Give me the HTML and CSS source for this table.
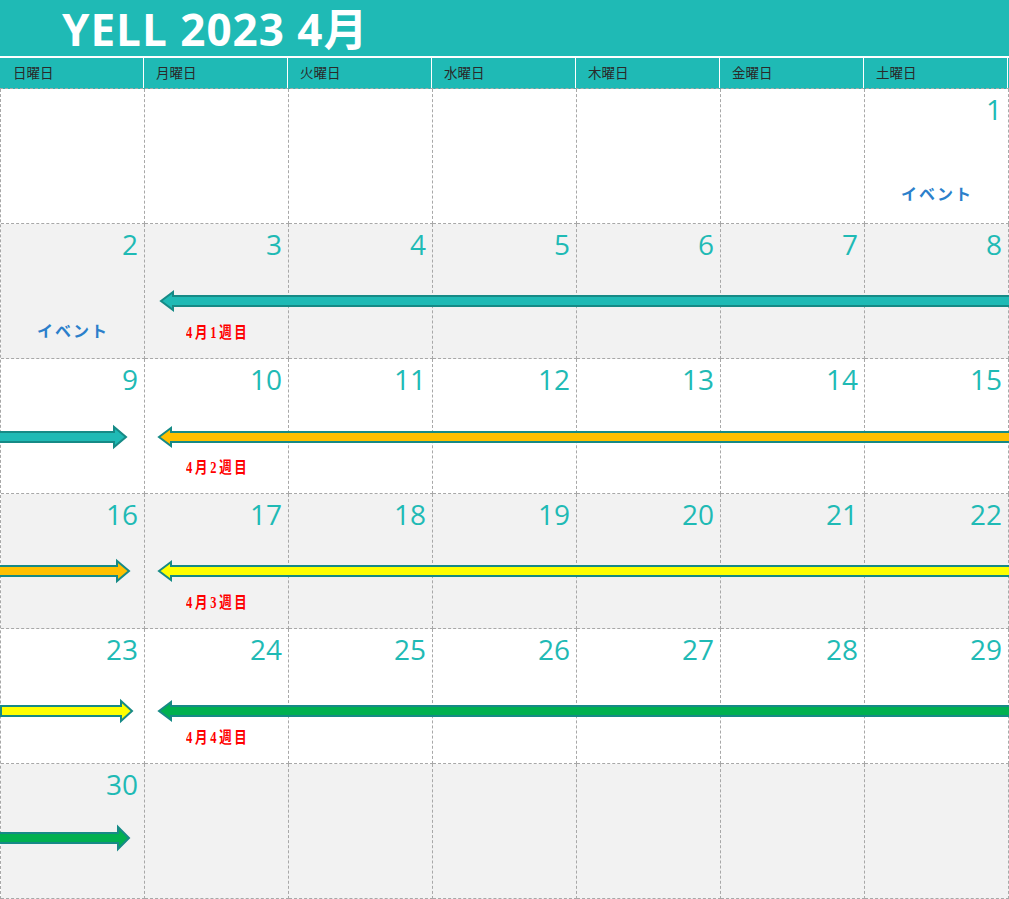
FILE: index.html
```html
<!DOCTYPE html>
<html lang="ja">
<head>
<meta charset="utf-8">
<link rel="stylesheet" href="styles.css">
</head>
<body>
<div class="page">
  <div class="title">YELL 2023 4月</div>
  <div class="weekdays">
    <div class="wd">日曜日</div><div class="wd">月曜日</div><div class="wd">火曜日</div><div class="wd">水曜日</div><div class="wd">木曜日</div><div class="wd">金曜日</div><div class="wd">土曜日</div>
  </div>
  <div class="grid">
    <div class="cell"></div><div class="cell"></div><div class="cell"></div><div class="cell"></div><div class="cell"></div><div class="cell"></div>
    <div class="cell"><span class="num">1</span><span class="event ev-sat">イベント</span></div>

    <div class="cell alt"><span class="num">2</span><span class="event ev-sun">イベント</span></div>
    <div class="cell alt"><span class="num">3</span><span class="week">4月1週目</span></div>
    <div class="cell alt"><span class="num">4</span></div>
    <div class="cell alt"><span class="num">5</span></div>
    <div class="cell alt"><span class="num">6</span></div>
    <div class="cell alt"><span class="num">7</span></div>
    <div class="cell alt"><span class="num">8</span></div>

    <div class="cell"><span class="num">9</span></div>
    <div class="cell"><span class="num">10</span><span class="week">4月2週目</span></div>
    <div class="cell"><span class="num">11</span></div>
    <div class="cell"><span class="num">12</span></div>
    <div class="cell"><span class="num">13</span></div>
    <div class="cell"><span class="num">14</span></div>
    <div class="cell"><span class="num">15</span></div>

    <div class="cell alt"><span class="num">16</span></div>
    <div class="cell alt"><span class="num">17</span><span class="week">4月3週目</span></div>
    <div class="cell alt"><span class="num">18</span></div>
    <div class="cell alt"><span class="num">19</span></div>
    <div class="cell alt"><span class="num">20</span></div>
    <div class="cell alt"><span class="num">21</span></div>
    <div class="cell alt"><span class="num">22</span></div>

    <div class="cell"><span class="num">23</span></div>
    <div class="cell"><span class="num">24</span><span class="week">4月4週目</span></div>
    <div class="cell"><span class="num">25</span></div>
    <div class="cell"><span class="num">26</span></div>
    <div class="cell"><span class="num">27</span></div>
    <div class="cell"><span class="num">28</span></div>
    <div class="cell"><span class="num">29</span></div>

    <div class="cell alt"><span class="num">30</span></div>
    <div class="cell alt"></div><div class="cell alt"></div><div class="cell alt"></div><div class="cell alt"></div><div class="cell alt"></div><div class="cell alt"></div>

    <svg class="arrows" width="1009" height="810" viewBox="0 0 1009 810">
      <polygon class="a-teal" points="161,212 173,203 173,207 1010,207 1010,217 173,217 173,221" />
      <polygon class="a-teal" points="-2,343 114,343 114,338 126,348 114,358 114,353 -2,353" />
      <polygon class="a-gold" points="159,348 171,339 171,343 1010,343 1010,353 171,353 171,357" />
      <polygon class="a-gold" points="-2,477 117,477 117,472 129,482 117,492 117,487 -2,487" />
      <polygon class="a-yellow" points="159,482 171,473 171,477 1010,477 1010,487 171,487 171,491" />
      <polygon class="a-yellow" points="1,617 121,617 121,612 132,622 121,632 121,627 1,627" />
      <polygon class="a-green" points="159,622 171,613 171,617 1010,617 1010,627 171,627 171,631" />
      <polygon class="a-green" points="-2,744 118,744 118,738 129,749 118,760 118,754 -2,754" />
    </svg>
  </div>
</div>
</body>
</html>
```

FILE: styles.css
```css
* { box-sizing: border-box; }
html, body { margin: 0; padding: 0; background: #fff; }
body { font-family: "Noto Sans CJK JP", "Noto Sans", sans-serif; }
.page { width: 1009px; }
.title {
  height: 56px;
  background: #1FBAB5;
  color: #fff;
  font-family: "Open Sans", "Noto Sans CJK JP", sans-serif;
  font-weight: 700;
  font-size: 44px;
  line-height: 58px;
  padding-left: 62px;
  letter-spacing: 1px;
}
.weekdays {
  margin-top: 2px;
  display: grid;
  grid-template-columns: repeat(7, 144px) 1px;
  height: 31px;
  background: #1FBAB5;
  border-bottom: 1px dashed #a8a8a8;
}
.wd {
  border-right: 1px solid #fff;
  font-size: 13.5px;
  color: #2a2a2a;
  padding-left: 12px;
  line-height: 29px;
}
.wd:first-child { padding-left: 13px; }
.grid {
  position: relative;
  display: grid;
  grid-template-columns: repeat(7, 144px);
  grid-auto-rows: 135px;
  width: 1009px;
  border-left: 1px dashed #a8a8a8;
}
.cell {
  position: relative;
  border-right: 1px dashed #a8a8a8;
  border-bottom: 1px dashed #a8a8a8;
  background: #fff;
}
.cell.alt { background: #F2F2F2; }
.num {
  position: absolute;
  right: 6px;
  top: 1px;
  font-family: "Open Sans", sans-serif;
  font-size: 28px;
  color: #1FBAB5;
  line-height: 38px;
}
.event {
  position: absolute;
  color: #2B7FCB;
  font-weight: 700;
  font-size: 16px;
  letter-spacing: 2px;
}
.ev-sat { left: 36px; top: 92px; }
.ev-sun { left: 36px; top: 94px; }
.week {
  position: absolute;
  left: 41px;
  top: 95px;
  color: #FF0000;
  font-family: "Liberation Serif", "Noto Sans CJK JP", serif;
  font-weight: 700;
  font-size: 16px;
  transform: scaleX(0.78);
  transform-origin: left center;
  letter-spacing: 3.5px;
  white-space: nowrap;
}
.arrows {
  position: absolute;
  left: -1px;
  top: 0;
  pointer-events: none;
  overflow: visible;
}
.arrows polygon { stroke: #168A86; stroke-width: 2; stroke-linejoin: miter; }
.a-teal { fill: #1FBAB5; }
.a-gold { fill: #FFC000; }
.a-yellow { fill: #FFFF00; }
.a-green { fill: #00B050; }
```
